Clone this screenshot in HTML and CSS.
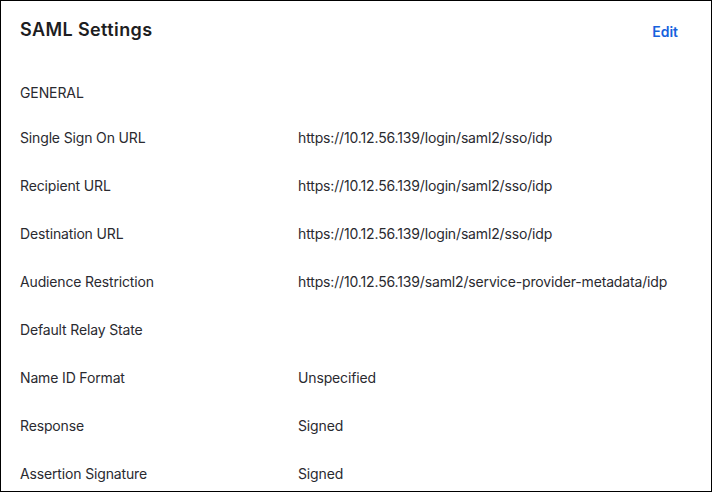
FILE: index.html
```html
<!DOCTYPE html>
<html>
<head>
<meta charset="utf-8">
<link rel="stylesheet" href="styles.css">
</head>
<body>
<section class="card">
  <header class="card-head">
    <h2 class="title">SAML Settings</h2>
    <a class="edit" href="#">Edit</a>
  </header>
  <div class="section-label">GENERAL</div>
  <dl class="rows">
    <div class="row"><dt>Single Sign On URL</dt><dd>https://10.12.56.139/login/saml2/sso/idp</dd></div>
    <div class="row"><dt>Recipient URL</dt><dd>https://10.12.56.139/login/saml2/sso/idp</dd></div>
    <div class="row"><dt>Destination URL</dt><dd>https://10.12.56.139/login/saml2/sso/idp</dd></div>
    <div class="row"><dt>Audience Restriction</dt><dd>https://10.12.56.139/saml2/service-provider-metadata/idp</dd></div>
    <div class="row"><dt>Default Relay State</dt><dd></dd></div>
    <div class="row"><dt>Name ID Format</dt><dd>Unspecified</dd></div>
    <div class="row"><dt>Response</dt><dd>Signed</dd></div>
    <div class="row"><dt>Assertion Signature</dt><dd>Signed</dd></div>
  </dl>
</section>
</body>
</html>
```

FILE: styles.css
```css
html, body {
  margin: 0;
  padding: 0;
  background: #fff;
}
.card {
  box-sizing: border-box;
  width: 712px;
  height: 492px;
  border: 1px solid #000;
  overflow: hidden;
  font-family: "Inter", "Noto Sans", sans-serif;
  color: #2a2a30;
  padding: 0 19px;
}
.card-head {
  display: flex;
  justify-content: space-between;
  align-items: flex-start;
  height: 72px;
}
.title {
  margin: 17px 0 0;
  font-size: 18px;
  line-height: 24px;
  font-weight: 600;
  letter-spacing: 0.4px;
  color: #1d1d21;
}
.edit {
  margin: 21px 14px 0 0;
  font-size: 14px;
  line-height: 20px;
  font-weight: 600;
  color: #1662dd;
  text-decoration: none;
}
.section-label {
  font-size: 14px;
  line-height: 20px;
  height: 20px;
  margin-top: 10px;
  letter-spacing: -0.1px;
}
.rows {
  margin: 25px 0 0;
}
.row {
  display: flex;
  font-size: 14px;
  line-height: 20px;
  height: 48px;
  letter-spacing: -0.15px;
}
.row dt {
  width: 278px;
  flex: none;
}
.row dd {
  margin: 0;
}
```
